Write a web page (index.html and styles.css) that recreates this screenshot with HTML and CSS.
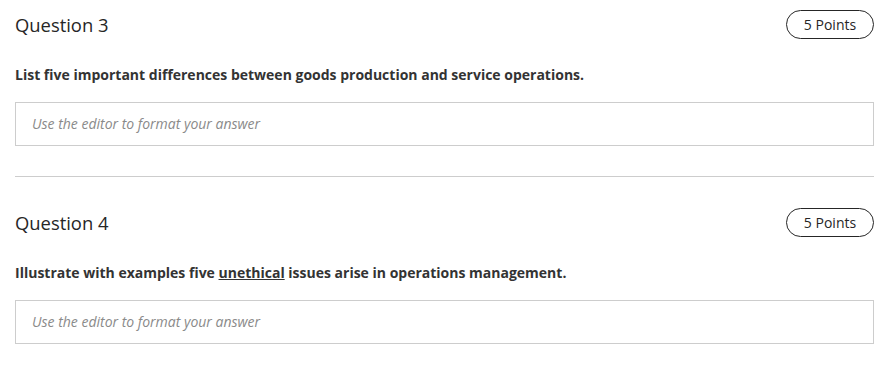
FILE: index.html
```html
<!DOCTYPE html>
<html lang="en">
<head>
    <meta charset="UTF-8">
    <title>Questions</title>
    <link rel="stylesheet" href="styles.css">
</head>
<body>

<div class="container">
    <!-- Question 3 -->
    <div class="question">
        <div class="question-header">
            <h2>Question 3</h2>
            <span class="points">5 Points</span>
        </div>
        <p class="question-text">List five important differences between goods production and service operations.</p>
        <div class="answer-box">Use the editor to format your answer</div>
    </div>

    <hr class="divider">

    <!-- Question 4 -->
    <div class="question">
        <div class="question-header">
            <h2>Question 4</h2>
            <span class="points">5 Points</span>
        </div>
        <p class="question-text">Illustrate with examples five <u>unethical</u> issues arise in operations management.</p>
        <div class="answer-box">Use the editor to format your answer</div>
    </div>
</div>

</body>
</html>
```
FILE: styles.css
```css
body {
    font-family: "Open Sans", "Noto Sans", sans-serif;
    background-color: #fff;
    color: #262626;
    margin: 0;
    padding: 0;
}

.container {
    width: 859px;
    padding-left: 15px;
}

.question {
    padding-top: 10px;
}

.divider + .question {
    padding-top: 31px;
}

.question-header {
    display: flex;
    justify-content: space-between;
    align-items: center;
    height: 29px;
}

.question-header h2 {
    font-size: 18.4px;
    font-weight: 400;
    margin: 0;
}

.points {
    border: 1px solid #262626;
    border-radius: 15px;
    box-sizing: border-box;
    display: flex;
    align-items: center;
    justify-content: center;
    font-size: 14px;
    width: 88px;
    height: 29px;
}

.question-text {
    font-size: 14px;
    font-weight: 700;
    line-height: 18px;
    color: #333;
    margin: 27px 0 18px 0;
}

.answer-box {
    border: 1px solid #cdcdcd;
    height: 42px;
    line-height: 42px;
    padding-left: 16px;
    font-size: 14px;
    font-style: italic;
    color: #8a8a8a;
}

.divider {
    border: none;
    border-top: 1px solid #cdcdcd;
    margin: 30px 0 0 0;
}
```
